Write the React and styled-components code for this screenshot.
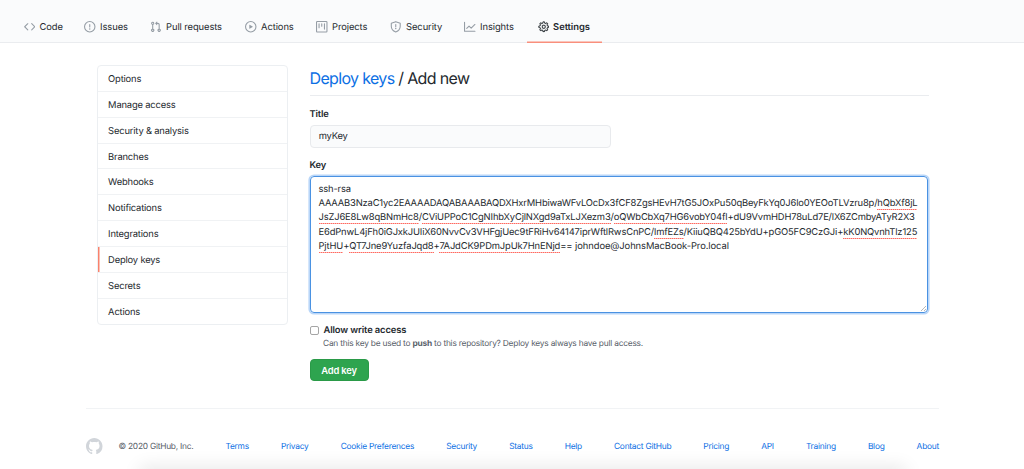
import React from "react";
import styled, { createGlobalStyle, css } from "styled-components";
import { GoGear } from "react-icons/go";

const GlobalStyle = createGlobalStyle`
  *, *::before, *::after { box-sizing: border-box; }
  body {
    margin: 0;
    background: #fff;
    color: #24292e;
    font: 9.4px/14.4px Inter, "Liberation Sans", sans-serif;
    text-rendering: geometricPrecision;
    overflow: hidden;
  }
  a { color: #0c6fe4; text-decoration: none; }
`;

const Page = styled.div`
  height: 469px;
  position: relative;
  overflow: hidden;
`;

const NavBar = styled.nav`
  display: flex;
  height: 43px;
  padding: 11px 0 0 12px;
  background: #fafbfc;
  border-bottom: 1px solid #eaecef;
`;

const Tab = styled.a`
  display: flex;
  align-items: center;
  gap: 4.6px;
  flex: 0 0 ${(p) => p.$width}px;
  height: 32px;
  padding-left: 11.5px;
  letter-spacing: ${(p) => (p.$active ? -0.05 : -0.1)}px;
  line-height: 14px;
  white-space: nowrap;
  && { color: #24292e; }
  ${(p) =>
    p.$active &&
    css`
      font-weight: 600;
      box-shadow: inset 0 -1.5px #f98f7c;
    `}
  svg {
    width: 11.5px;
    height: 11.5px;
    flex: none;
    fill: ${(p) => (p.$active ? "#24292e" : "#959da5")};
    ${(p) => p.$active && css`
      margin: 0 -0.5px 0 -1px;
      stroke: #24292e;
      stroke-width: 0.5;
    `}
  }
`;

const TabLabel = styled.span`
  padding-top: 1.6px;
`;

const Layout = styled.div`
  display: flex;
  gap: 21.5px;
  width: 832px;
  margin: 22px 0 0 96.5px;
`;

const Menu = styled.aside`
  width: 192px;
  height: 260px;
  border: 1px solid #eceff2;
  border-radius: 4px;
  overflow: hidden;
`;

const MenuItem = styled.a`
  display: block;
  height: 25.85px;
  padding-left: 10.6px;
  line-height: 27.4px;
  letter-spacing: -0.18px;
  && { color: #24292e; }
  border-bottom: 1px solid #f0f2f4;
  &:last-child { border-bottom: 0; }
  ${(p) => p.$active && css`box-shadow: inset 1.5px 0 #f9826c;`}
`;

const Content = styled.main`
  flex: 1;
  display: flex;
  flex-direction: column;
  align-items: flex-start;
`;

const Heading = styled.h2`
  width: 619px;
  height: 31px;
  margin: 0 0 11px;
  border-bottom: 1px solid #eaecef;
  font-size: 16px;
  font-weight: 400;
  line-height: 26px;
  letter-spacing: -0.66px;
`;

const FieldLabel = styled.label`
  height: 18px;
  padding-top: ${(p) => p.$drop}px;
  font-weight: 600;
  letter-spacing: -0.15px;
`;

const TextField = styled.div`
  width: 301px;
  height: 22.5px;
  margin-bottom: 9.5px;
  padding: 0 8.2px;
  border: 1px solid #e8eaed;
  border-radius: 4px;
  background: #fafbfc;
  line-height: 21.8px;
  letter-spacing: -0.2px;
`;

const KeyArea = styled.div`
  position: relative;
  width: 618.5px;
  height: 137px;
  margin: 0.5px 0 10.5px;
  padding: 6px 8px;
  border: 1px solid #4a92e2;
  border-radius: 4px;
  box-shadow: 0 0 0 1.6px #b9d6f8;
`;

const KeyLine = styled.div`
  height: 14.4px;
  white-space: pre;
  letter-spacing: ${(p) => p.$spacing}px;
`;

const Misspelled = styled.span`
  padding-bottom: 1px;
  background: repeating-linear-gradient(90deg, #ff6a60 0 1px, #ffb4b0 1px 2px) 0 100% / 100% 1px no-repeat;
`;

const Host = styled.span`
  letter-spacing: -0.07px;
`;

const ResizeGrip = styled.svg`
  position: absolute;
  right: 1px;
  bottom: 1px;
  width: 5px;
  height: 5px;
`;

const CheckRow = styled.div`
  display: flex;
  align-items: center;
  gap: 5px;
  height: 14px;
  font-weight: 600;
  letter-spacing: -0.12px;
`;

const CheckLabel = styled.span`
  padding-top: 2.4px;
`;

const Checkbox = styled.span`
  width: 9px;
  height: 9px;
  border: 1px solid #a5a5a5;
  border-radius: 2px;
`;

const Hint = styled.p`
  margin: 0 0 9px 13.5px;
  height: 13px;
  font-size: 8.4px;
  line-height: 14.6px;
  letter-spacing: -0.23px;
  color: #586069;
  white-space: nowrap;
`;

const SubmitButton = styled.button`
  width: 59px;
  height: 22px;
  padding: 1px 0 0;
  border: 1px solid #2a9a48;
  border-radius: 4px;
  background: #2ea44f;
  color: #fff;
  font: 600 9.4px/20px Inter, sans-serif;
  letter-spacing: -0.18px;
`;

const Footer = styled.footer`
  display: flex;
  justify-content: space-between;
  align-items: center;
  width: 853px;
  height: 73px;
  margin: 27px 0 0 86px;
  padding-top: 4.5px;
  border-top: 1px solid #f1f3f5;
  font-size: 8.4px;
  letter-spacing: -0.25px;
  white-space: nowrap;
`;

const Owner = styled.div`
  display: flex;
  align-items: center;
  gap: 16px;
  color: #586069;
  svg { width: 16.5px; height: 16.5px; margin-top: -3px; fill: #d1d5da; }
`;

const BottomShade = styled.div`
  position: absolute;
  left: 142px;
  right: 120px;
  bottom: -12px;
  height: 12px;
  box-shadow: 0 0 18px 2px rgba(0, 0, 0, 0.1);
`;

const Icon = ({ d, children }) => (
  <svg viewBox="0 0 16 16" fillRule="evenodd">
    {d ? <path d={d} /> : children}
  </svg>
);

const paths = {
  code: "M4.72 3.22a.75.75 0 011.06 1.06L2.06 8l3.72 3.72a.75.75 0 11-1.06 1.06L.47 8.53a.75.75 0 010-1.06l4.25-4.25zm6.56 0a.75.75 0 10-1.06 1.06L13.94 8l-3.72 3.72a.75.75 0 101.06 1.06l4.25-4.25a.75.75 0 000-1.06l-4.25-4.25z",
  issue: "M8 1.5a6.5 6.5 0 100 13 6.5 6.5 0 000-13zM0 8a8 8 0 1116 0A8 8 0 010 8zm9 3a1 1 0 11-2 0 1 1 0 012 0zm-.25-6.25a.75.75 0 00-1.5 0v3.5a.75.75 0 001.5 0v-3.5z",
  pull: "M7.177 3.073L9.573.677A.25.25 0 0110 .854v4.792a.25.25 0 01-.427.177L7.177 3.427a.25.25 0 010-.354zM3.75 2.5a.75.75 0 100 1.5.75.75 0 000-1.5zm-2.25.75a2.25 2.25 0 113 2.122v5.256a2.251 2.251 0 11-1.5 0V5.372A2.25 2.25 0 011.5 3.25zM11 2.5h-1V4h1a1 1 0 011 1v5.628a2.251 2.251 0 101.5 0V5A2.5 2.5 0 0011 2.5zm1 10.25a.75.75 0 111.5 0 .75.75 0 01-1.5 0zM3.75 12a.75.75 0 100 1.5.75.75 0 000-1.5z",
  play: "M1.5 8a6.5 6.5 0 1113 0 6.5 6.5 0 01-13 0zM8 0a8 8 0 100 16A8 8 0 008 0zM6.379 5.227A.25.25 0 006 5.442v5.117a.25.25 0 00.379.214l4.264-2.559a.25.25 0 000-.428L6.379 5.227z",
  project: "M1.75 0A1.75 1.75 0 000 1.75v12.5C0 15.216.784 16 1.75 16h12.5A1.75 1.75 0 0016 14.25V1.75A1.75 1.75 0 0014.25 0H1.75zM1.5 1.75a.25.25 0 01.25-.25h12.5a.25.25 0 01.25.25v12.5a.25.25 0 01-.25.25H1.75a.25.25 0 01-.25-.25V1.75zM11.75 3a.75.75 0 00-.75.75v7.5a.75.75 0 001.5 0v-7.5a.75.75 0 00-.75-.75zm-8.25.75a.75.75 0 011.5 0v5.5a.75.75 0 01-1.5 0v-5.5zM8 3a.75.75 0 00-.75.75v3.5a.75.75 0 001.5 0v-3.5A.75.75 0 008 3z",
  mark: "M8 0C3.58 0 0 3.58 0 8c0 3.54 2.29 6.53 5.47 7.59.4.07.55-.17.55-.38 0-.19-.01-.82-.01-1.49-2.01.37-2.53-.49-2.69-.94-.09-.23-.48-.94-.82-1.13-.28-.15-.68-.52-.01-.53.63-.01 1.08.58 1.23.82.72 1.21 1.87.87 2.33.66.07-.52.28-.87.51-1.07-1.78-.2-3.64-.89-3.64-3.95 0-.87.31-1.59.82-2.15-.08-.2-.36-1.02.08-2.12 0 0 .67-.21 2.2.82.64-.18 1.32-.27 2-.27.68 0 1.36.09 2 .27 1.53-1.04 2.2-.82 2.2-.82.44 1.1.16 1.92.08 2.12.51.56.82 1.27.82 2.15 0 3.07-1.87 3.75-3.65 3.95.29.25.54.73.54 1.48 0 1.07-.01 1.93-.01 2.2 0 .21.15.46.55.38A8.013 8.013 0 0016 8c0-4.42-3.58-8-8-8z",
};

const ShieldIcon = () => (
  <Icon>
    <path d="M8 .9 14.2 3v4.2c0 3.8-2.3 6.5-6.2 8-3.9-1.5-6.2-4.2-6.2-8V3z" fill="none" stroke="#959da5" strokeWidth="1.5" strokeLinejoin="round" />
    <path d="M8 4.75v3.25" stroke="#959da5" strokeWidth="1.5" strokeLinecap="round" />
    <circle cx="8" cy="10.5" r="1" />
  </Icon>
);

const GraphIcon = () => (
  <Icon>
    <path d="M.75 1.75v12.5h14.5M3.8 10.2 7 7l3 3 5.2-5.2" fill="none" stroke="#959da5" strokeWidth="1.5" strokeLinecap="round" strokeLinejoin="round" />
  </Icon>
);

const tabs = [
  ["Code", 60.5, <Icon d={paths.code} />],
  ["Issues", 66, <Icon d={paths.issue} />],
  ["Pull requests", 95, <Icon d={paths.pull} />],
  ["Actions", 71, <Icon d={paths.play} />],
  ["Projects", 74, <Icon d={paths.project} />],
  ["Security", 74, <ShieldIcon />],
  ["Insights", 74.5, <GraphIcon />],
  ["Settings", 74.5, <GoGear />],
];

const menu = ["Options", "Manage access", "Security & analysis", "Branches", "Webhooks", "Notifications", "Integrations", "Deploy keys", "Secrets", "Actions"];

const footerLinks = ["Terms", "Privacy", "Cookie Preferences", "Security", "Status", "Help", "Contact GitHub", "Pricing", "API", "Training", "Blog", "About"];

export default function App() {
  return (
    <Page>
      <GlobalStyle />
      <NavBar>
        {tabs.map(([label, width, icon]) => (
          <Tab key={label} $width={width} $active={label === "Settings"}>
            {icon}
            <TabLabel>{label}</TabLabel>
          </Tab>
        ))}
      </NavBar>
      <Layout>
        <Menu>
          {menu.map((label) => (
            <MenuItem key={label} $active={label === "Deploy keys"}>{label}</MenuItem>
          ))}
        </Menu>
        <Content>
          <Heading><a>Deploy keys</a> / Add new</Heading>
          <FieldLabel $drop={0.8}>Title</FieldLabel>
          <TextField>myKey</TextField>
          <FieldLabel $drop={2}>Key</FieldLabel>
          <KeyArea>
            <KeyLine $spacing={-0.17}>ssh-rsa</KeyLine>
            <KeyLine $spacing={-0.17}>
              AAAAB3NzaC1yc2EAAAADAQABAAABAQDXHxrMHbiwaWFvLOcDx3fCF8ZgsHEvH7tG5JOxPu50qBeyFkYq0J6lo0YEOoTLVzru8p/<Misspelled>hQbXf8jL</Misspelled>
            </KeyLine>
            <KeyLine $spacing={-0.155}>
              <Misspelled>JsZJ6E8Lw8qBNmHc8</Misspelled>/<Misspelled>CViUPPoC1CgNIhbXyCjlNXgd9aTxLJXezm3</Misspelled>/<Misspelled>oQWbCbXq7HG6vobY04fl</Misspelled>+dU9VvmHDH78uLd7E/lX6ZCmbyATyR2X3
            </KeyLine>
            <KeyLine $spacing={-0.15}>
              E6dPnwL4jFh0iGJxkJUIiX60NvvCv3VHFgjUec9tFRiHv64147iprWftlRwsCnPC/<Misspelled>lmfEZs</Misspelled>/KiiuQBQ425bYdU+pGO5FC9CzGJi+<Misspelled>kK0NQvnhTlz125</Misspelled>
            </KeyLine>
            <KeyLine $spacing={-0.13}>
              <Misspelled>PjtHU</Misspelled>+<Misspelled>QT7Jne9YuzfaJqd8</Misspelled>+<Misspelled>7AJdCK9PDmJpUk7HnENjd</Misspelled>
              <Host>== johndoe@JohnsMacBook-Pro.local</Host>
            </KeyLine>
            <ResizeGrip viewBox="0 0 5 5">
              <path d="M0 5 5 0M3 5 5 3" stroke="#9a9a9a" strokeWidth=".7" />
            </ResizeGrip>
          </KeyArea>
          <CheckRow><Checkbox /><CheckLabel>Allow write access</CheckLabel></CheckRow>
          <Hint>Can this key be used to <strong>push</strong> to this repository? Deploy keys always have pull access.</Hint>
          <SubmitButton>Add key</SubmitButton>
        </Content>
      </Layout>
      <Footer>
        <Owner><Icon d={paths.mark} />© 2020 GitHub, Inc.</Owner>
        {footerLinks.map((label) => <a key={label}>{label}</a>)}
      </Footer>
      <BottomShade />
    </Page>
  );
}
